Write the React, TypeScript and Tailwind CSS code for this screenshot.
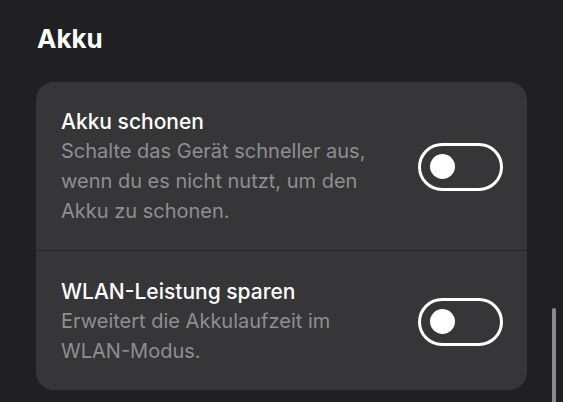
import React from 'react';

const font = { fontFamily: "Inter, 'Noto Sans', sans-serif" };

function Toggle() {
  return (
    <div className="w-[85px] h-[48px] rounded-full border-[3px] border-white flex items-center pl-[9px] shrink-0">
      <div className="w-[25px] h-[25px] rounded-full bg-white" />
    </div>
  );
}

function Row({ title, lines }: { title: string; lines: string[] }) {
  return (
    <div className="flex items-center justify-between pl-[25px] pr-[24px]">
      <div className="flex flex-col">
        <span className="text-[21px] leading-[29px] font-medium text-white">{title}</span>
        {lines.map((l) => (
          <span key={l} className="text-[20px] leading-[30px] text-[#8e8e93]">{l}</span>
        ))}
      </div>
      <Toggle />
    </div>
  );
}

export default function App() {
  return (
    <div className="relative w-[563px] h-[402px] overflow-hidden bg-[#202022]" style={font}>
      <h1 className="pl-[37px] pt-[22px] text-[26px] leading-[34px] font-bold text-white">Akku</h1>
      <div className="mx-9 mt-[26px] rounded-[18px] bg-[#363638] flex flex-col">
        <div className="pt-[25px] pb-[24px]">
          <Row
            title="Akku schonen"
            lines={['Schalte das Gerät schneller aus,', 'wenn du es nicht nutzt, um den', 'Akku zu schonen.']}
          />
        </div>
        <div className="h-px bg-[#27272a]" />
        <div className="pt-[26px] pb-[24px]">
          <Row title="WLAN-Leistung sparen" lines={['Erweitert die Akkulaufzeit im', 'WLAN-Modus.']} />
        </div>
      </div>
      <div className="absolute right-[7px] top-[308px] w-[4px] h-[110px] rounded-full bg-[#8a8a8e]" />
    </div>
  );
}
